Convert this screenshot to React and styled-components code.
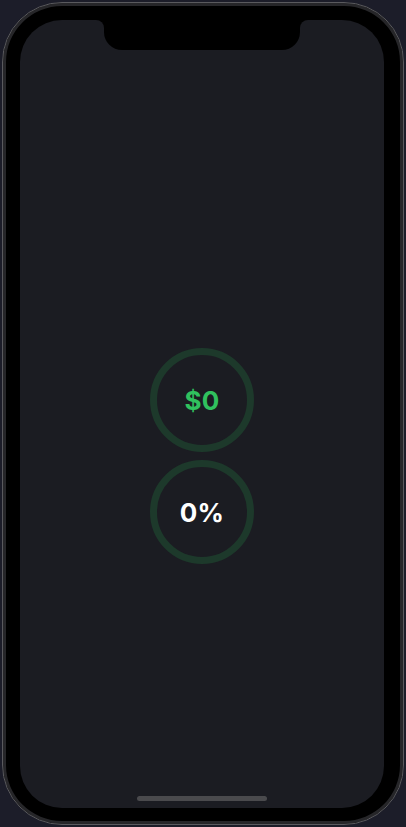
import React from "react";
import styled, { createGlobalStyle } from "styled-components";

const Global = createGlobalStyle`
  html, body {
    margin: 0;
    padding: 0;
    background: #1c1d29;
    font-family: Inter, "Noto Sans", sans-serif;
  }
  #root { width: 406px; height: 827px; }
`;

const Page = styled.div`
  width: 406px;
  height: 827px;
  box-sizing: border-box;
  padding: 2px;
  background: #1c1d29;
`;

const Phone = styled.div`
  position: relative;
  width: 402px;
  height: 823px;
  box-sizing: border-box;
  border-radius: 60px;
  border: 1px solid #5a5a5e;
  box-shadow: inset 0 0 0 3px #262629;
  background: #000;
  padding: 17px 19px 16px 17px;
`;

const Screen = styled.div`
  position: relative;
  width: 100%;
  height: 100%;
  border-radius: 42px;
  background: #1b1c22;
  display: flex;
  flex-direction: column;
  align-items: center;
  overflow: hidden;
`;

const Notch = styled.div`
  position: absolute;
  top: 0;
  left: 84px;
  width: 196px;
  height: 30px;
  background: #000;
  border-radius: 0 0 18px 18px;

  &::before,
  &::after {
    content: "";
    position: absolute;
    top: 0;
    width: 8px;
    height: 8px;
    background: transparent;
  }
  &::before {
    left: -8px;
    border-top-right-radius: 8px;
    box-shadow: 4px -4px 0 4px #000;
  }
  &::after {
    right: -8px;
    border-top-left-radius: 8px;
    box-shadow: -4px -4px 0 4px #000;
  }
`;

const Content = styled.div`
  flex: 1;
  width: 100%;
  box-sizing: border-box;
  padding-top: 96px;
  display: flex;
  flex-direction: column;
  align-items: center;
  justify-content: center;
  gap: 8px;
`;

const Ring = styled.div`
  width: 104px;
  height: 104px;
  box-sizing: border-box;
  border-radius: 50%;
  border: 7px solid #1d392b;
  display: flex;
  align-items: center;
  justify-content: center;
`;

const Value = styled.span`
  font-family: Inter, "Noto Sans", sans-serif;
  font-weight: 700;
  font-size: 26px;
  letter-spacing: 0.3px;
  color: ${(p) => (p.$accent ? "#30c15e" : "#ffffff")};
`;

const HomeBar = styled.div`
  width: 130px;
  height: 5px;
  border-radius: 3px;
  background: #4a4a4d;
  margin-bottom: 7px;
  flex-shrink: 0;
`;

export default function App() {
  return (
    <>
      <Global />
      <Page>
        <Phone>
          <Screen>
            <Notch />
            <Content>
              <Ring>
                <Value $accent>$0</Value>
              </Ring>
              <Ring>
                <Value>0%</Value>
              </Ring>
            </Content>
            <HomeBar />
          </Screen>
        </Phone>
      </Page>
    </>
  );
}
